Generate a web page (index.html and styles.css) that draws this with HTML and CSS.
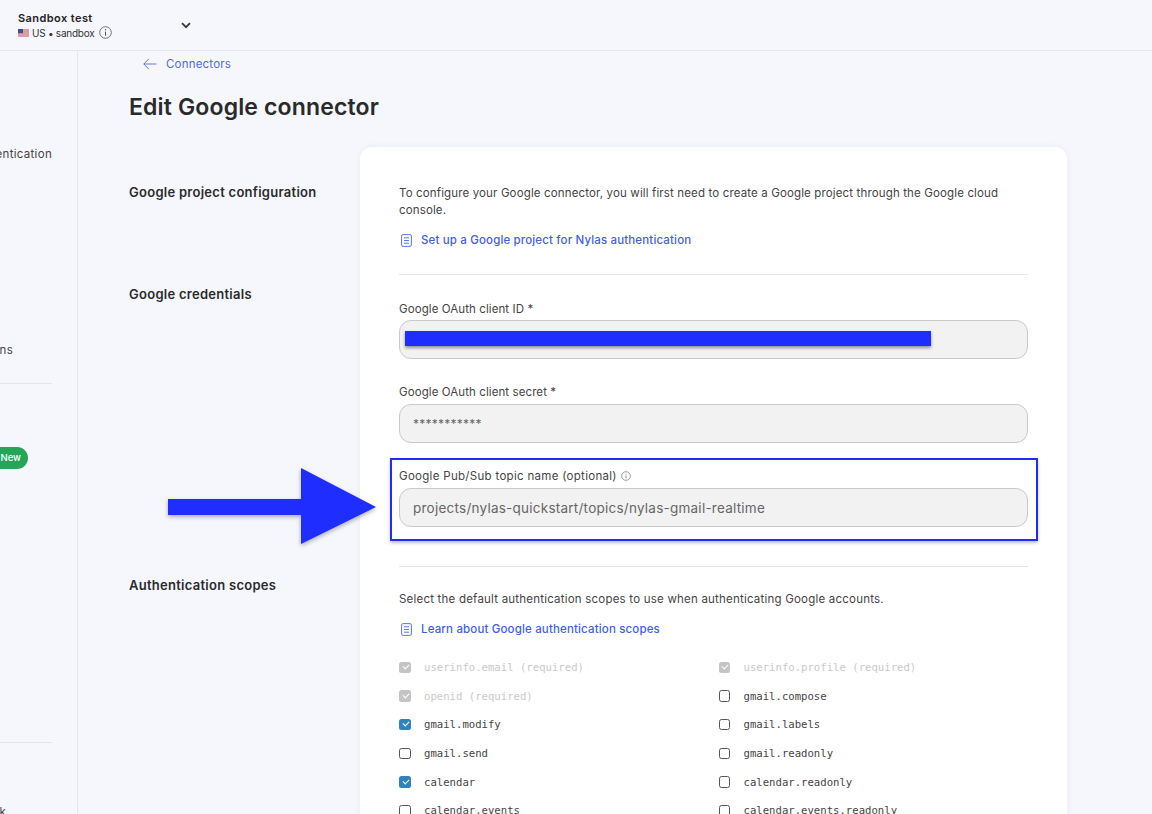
FILE: index.html
```html
<!DOCTYPE html>
<html lang="en">
<head>
<meta charset="utf-8">
<title>Edit Google connector</title>
<link rel="stylesheet" href="styles.css">
</head>
<body>
<header class="topbar">
  <div class="app-switch">
    <div class="app-name">Sandbox test</div>
    <div class="app-meta">
      <svg class="flag" viewBox="0 0 11 8" width="11" height="8"><rect width="11" height="8" rx="1" fill="#e8e8ee"/><path d="M0 1h11M0 3h11M0 5h11M0 7h11" stroke="#d8505a" stroke-width="1"/><rect width="5" height="4.2" fill="#3c4f9c"/></svg>
      <span>US • sandbox</span>
      <svg class="info" viewBox="0 0 13 13" width="13" height="13"><circle cx="6.5" cy="6.5" r="5.8" fill="none" stroke="#555" stroke-width=".8"/><path d="M6.5 5.6v4" stroke="#555" stroke-width="1"/><circle cx="6.5" cy="3.7" r=".7" fill="#555"/></svg>
    </div>
  </div>
  <svg class="chevron" viewBox="0 0 10 7" width="10" height="7"><path d="M1 1.2l4 4 4-4" fill="none" stroke="#333" stroke-width="1.7"/></svg>
</header>
<div class="shell">
  <nav class="sidebar">
    <div class="nav-item nav-auth">Authentication</div>
    <div class="nav-item nav-int">Integrations</div>
    <div class="nav-rule rule-a"></div>
    <div class="badge">New</div>
    <div class="nav-rule rule-b"></div>
    <div class="nav-item nav-last">k</div>
  </nav>
  <main class="main">
    <a class="back" href="#">
      <svg viewBox="0 0 14 12" width="14" height="12"><path d="M13.5 6H.8M5.8 1L.8 6l5 5" fill="none" stroke="#4e6be6" stroke-width=".9"/></svg>
      <span>Connectors</span>
    </a>
    <h1>Edit Google connector</h1>
    <div class="layout">
      <h2 class="side-label l1">Google project configuration</h2>
      <h2 class="side-label l2">Google credentials</h2>
      <h2 class="side-label l3">Authentication scopes</h2>
      <section class="card">
        <div class="sec sec1">
          <p class="copy">To configure your Google connector, you will first need to create a Google project through the Google cloud console.</p>
          <a class="doc-link" href="#">
            <svg viewBox="0 0 11 13" width="11" height="13"><rect x=".6" y=".6" width="9.8" height="11.8" rx="1.5" fill="none" stroke="#4766e4" stroke-width=".9"/><path d="M3 3.8h5M3 6.5h5M3 9.2h5" stroke="#4766e4" stroke-width=".9"/></svg>
            <span>Set up a Google project for Nylas authentication</span>
          </a>
        </div>
        <div class="sec sec2">
          <label class="field-label first">Google OAuth client ID *</label>
          <div class="input"></div>
          <label class="field-label second">Google OAuth client secret *</label>
          <div class="input">***********</div>
          <label class="field-label third">Google Pub/Sub topic name (optional)
            <svg viewBox="0 0 10 10" width="10" height="10"><circle cx="5" cy="5" r="4.3" fill="none" stroke="#777" stroke-width=".7"/><path d="M5 4.4v3" stroke="#777" stroke-width=".8"/><circle cx="5" cy="2.9" r=".5" fill="#777"/></svg>
          </label>
          <div class="input big">projects/nylas-quickstart/topics/nylas-gmail-realtime</div>
        </div>
        <div class="sec sec3">
          <p class="copy">Select the default authentication scopes to use when authenticating Google accounts.</p>
          <a class="doc-link" href="#">
            <svg viewBox="0 0 11 13" width="11" height="13"><rect x=".6" y=".6" width="9.8" height="11.8" rx="1.5" fill="none" stroke="#4766e4" stroke-width=".9"/><path d="M3 3.8h5M3 6.5h5M3 9.2h5" stroke="#4766e4" stroke-width=".9"/></svg>
            <span>Learn about Google authentication scopes</span>
          </a>
          <ul class="scopes">
            <li class="scope off"><i class="box done"></i>userinfo.email (required)</li>
            <li class="scope off"><i class="box done"></i>userinfo.profile (required)</li>
            <li class="scope off"><i class="box done"></i>openid (required)</li>
            <li class="scope"><i class="box"></i>gmail.compose</li>
            <li class="scope"><i class="box on"></i>gmail.modify</li>
            <li class="scope"><i class="box"></i>gmail.labels</li>
            <li class="scope"><i class="box"></i>gmail.send</li>
            <li class="scope"><i class="box"></i>gmail.readonly</li>
            <li class="scope"><i class="box on"></i>calendar</li>
            <li class="scope"><i class="box"></i>calendar.readonly</li>
            <li class="scope"><i class="box"></i>calendar.events</li>
            <li class="scope"><i class="box"></i>calendar.events.readonly</li>
          </ul>
        </div>
      </section>
    </div>
  </main>
</div>
<div class="redact"></div>
<div class="callout"></div>
<svg class="arrow" viewBox="0 0 210 78" width="210" height="78"><path d="M0 31h133V0l75 39-75 37V47H0z" fill="#1f2dff"/></svg>
</body>
</html>
```
FILE: styles.css
```css
* { box-sizing: border-box; }
html, body { margin: 0; height: 814px; overflow: hidden; }
body { background: #f6f7fd; font-family: Inter, "Liberation Sans", sans-serif; color: #333; position: relative; }

.topbar { height: 51px; border-bottom: 1px solid #e6e6e8; display: flex; align-items: center; padding-left: 18px; }
.app-switch { width: 163px; }
.app-name { font-size: 11px; font-weight: 600; letter-spacing: .42px; color: #222; line-height: 14px; margin-top: 0; }
.app-meta { display: flex; align-items: center; font-size: 10px; letter-spacing: -.25px; color: #333; line-height: 14px; margin-top: 1px; }
.flag { margin-right: 3px; }
.info { margin-left: 5px; }
.chevron { margin-top: 1px; }

.shell { display: flex; height: 763px; }
.sidebar { width: 78px; flex: none; border-right: 1px solid #e6e7ee; overflow: hidden; display: flex; flex-direction: column; align-items: flex-end; padding-right: 25px; }
.nav-item { font-size: 11.5px; letter-spacing: .3px; line-height: 20px; white-space: nowrap; color: #444; }
.nav-auth { margin-top: 93px; }
.nav-int { margin-top: 176px; margin-right: 39px; }
.nav-rule { width: 52px; height: 1px; background: #e1e3f3; flex: none; }
.rule-a { margin-top: 23px; }
.rule-b { margin-top: 273px; }
.badge { margin-top: 63px; height: 22px; width: 46px; margin-right: 24px; flex: none; border-radius: 11px; background: #25a55a; color: #fff; font-size: 9.5px; font-weight: 500; line-height: 22px; text-align: right; padding-right: 7px; }
.nav-last { margin-top: 59px; margin-right: 46px; }

.main { flex: 1; padding-left: 51px; min-width: 0; }
.back { display: flex; align-items: center; gap: 9px; margin-left: 14px; height: 26px; color: #4e6be6; text-decoration: none; font-size: 11.5px; letter-spacing: .2px; }
h1 { margin: 17px 0 0; font-size: 23px; letter-spacing: .15px; line-height: 26px; font-weight: 600; color: #2a2a2a; }

.layout { display: grid; grid-template-columns: 231px 707px; grid-template-rows: 128px 292px 300px; margin-top: 27px; }
.side-label { grid-column: 1; margin: 0; font-size: 13px; letter-spacing: .27px; line-height: 18px; font-weight: 600; color: #2b2b2b; }
.l1 { grid-row: 1; padding-top: 36px; }
.l2 { grid-row: 2; padding-top: 10px; }
.l3 { grid-row: 3; padding-top: 9px; }

.card { grid-column: 2; grid-row: 1 / 4; background: #fff; border-radius: 12px; padding: 0 39px; box-shadow: 0 0 6px rgba(40, 50, 110, .06); height: 700px; display: flex; flex-direction: column; }
.sec1 { height: 128px; padding-top: 38px; border-bottom: 1px solid #e6e6e8; }
.sec2 { height: 292px; padding-top: 25px; border-bottom: 1px solid #e6e6e8; }
.sec3 { padding-top: 24px; }
.copy { margin: 0; font-size: 11.5px; letter-spacing: .14px; line-height: 17px; color: #444; }
.sec3 .copy { letter-spacing: .21px; }
.doc-link { display: flex; align-items: center; gap: 10px; margin-top: 13px; margin-left: 2px; color: #3f5fe4; text-decoration: none; font-size: 11.5px; letter-spacing: .15px; font-weight: 500; line-height: 16px; }
.doc-link svg { margin-right: -1px; }

.field-label { display: flex; align-items: center; gap: 4px; font-size: 11.5px; letter-spacing: .09px; line-height: 16px; color: #444; margin-bottom: 4px; }
.field-label.first { position: relative; top: 1px; }
.field-label.second { margin-top: 25px; }
.field-label.third { margin-top: 25px; letter-spacing: .3px; }
.input { height: 39px; border: 1px solid #c9c9c9; border-radius: 12px; background: #f2f2f2; padding: 0 13px; display: flex; align-items: center; font-size: 12px; letter-spacing: .25px; color: #666; }
.input.big { font-size: 13.5px; letter-spacing: .24px; }

.scopes { list-style: none; margin: 16px 0 0; padding: 0; display: grid; grid-template-columns: 319.5px 1fr; grid-auto-rows: 28.7px; }
.scope { display: flex; align-items: center; gap: 13.5px; font-family: "DejaVu Sans Mono", monospace; font-size: 10.63px; color: #444; }
.scope.off { color: #c9c9c9; }
.box { width: 11.5px; height: 11.5px; flex: none; border: 1px solid #555; border-radius: 2.5px; background: #fff; position: relative; }
.box.on, .box.done { border: 0; background: #2e82bd; }
.box.done { background: #c4c4c4; }
.box.on::after, .box.done::after { content: ""; position: absolute; left: 3.5px; top: 2.5px; width: 5px; height: 3px; border-left: 1px solid #fff; border-bottom: 1px solid #fff; transform: rotate(-45deg); }

.redact { position: absolute; left: 405px; top: 331px; width: 526px; height: 15px; background: #1f2dff; box-shadow: 0 2px 3px rgba(0, 0, 0, .4); }
.callout { position: absolute; left: 390px; top: 458px; width: 648px; height: 83px; border: 2px solid #1f2dff; box-shadow: 0 2px 3px rgba(0, 0, 0, .25); }
.arrow { position: absolute; left: 168px; top: 468px; filter: drop-shadow(0 2px 2px rgba(0, 0, 0, .3)); }
```
